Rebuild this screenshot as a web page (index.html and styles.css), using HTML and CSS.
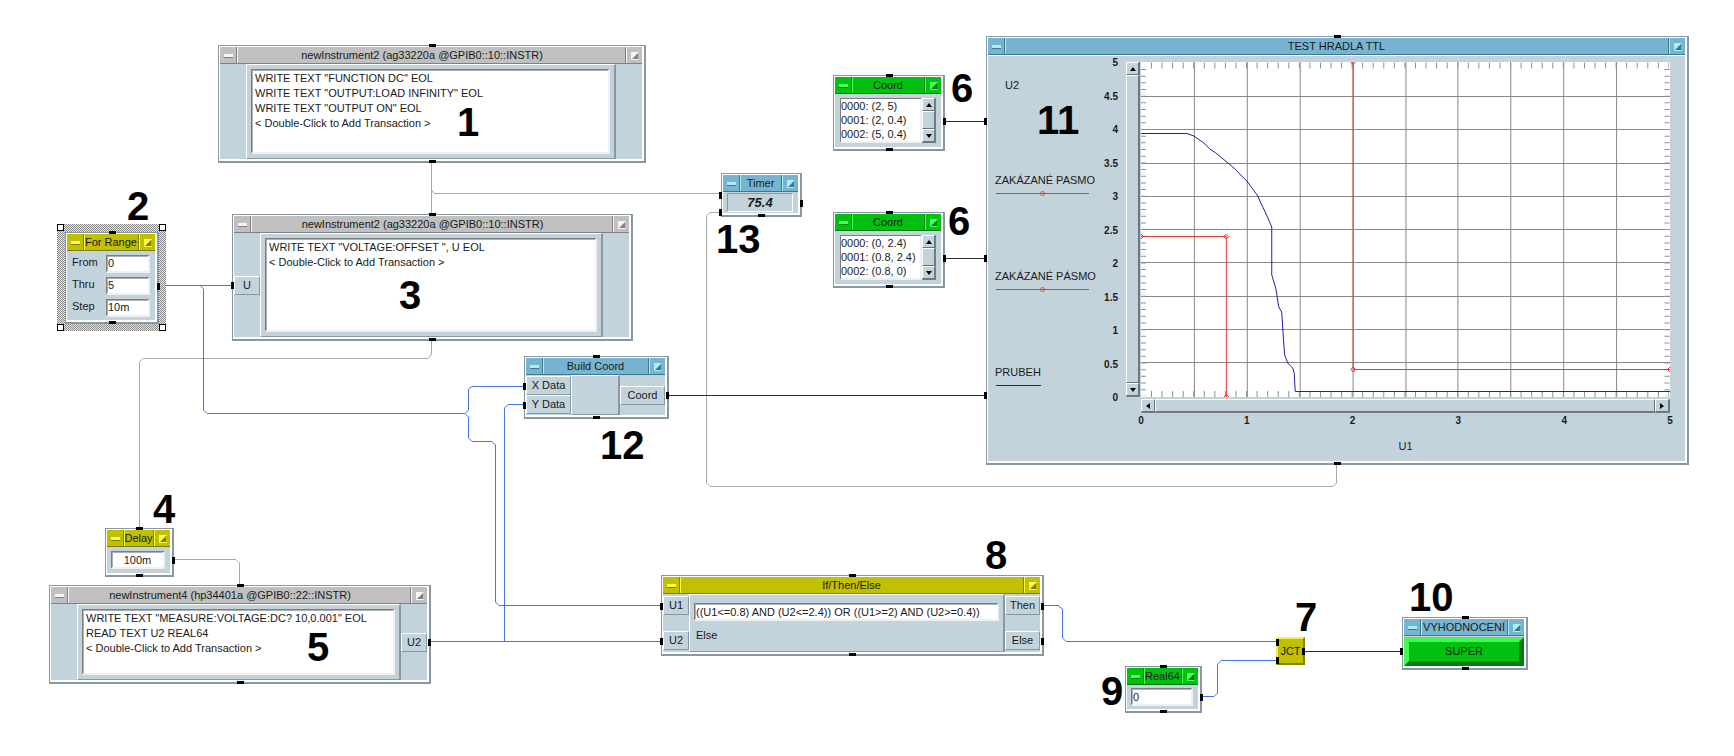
FILE: index.html
```html
<!DOCTYPE html>
<html lang="cs">
<head>
<meta charset="utf-8">
<title>Test hradla TTL</title>
<link rel="stylesheet" href="styles.css">
</head>
<body>
<main class="canvas">
  <svg class="wires" aria-hidden="true">
    <g class="seq">
      <path d="M431.500 163V214M431.500 190L434 193.500H721"/>
      <path d="M431.500 340V354L428 358.500H143L139.500 362V528"/>
      <path d="M174 559.500H236L239.500 563V586"/>
      <path d="M1336.500 464V483L1333 486.500H710L706.500 483V216L710 212.500H721"/>
    </g>
    <g class="data">
      <path d="M158 285.500H232M200 285.500L203.500 289V410L207 413.500H465L468.500 410V389L472 386.500H524"/>
      <path d="M465 413.500L468.500 417V438L472 441.500H492L495.500 445V602L499 605.500H661"/>
      <path d="M431 641.500H661M504.500 641V408L508 404.500H524"/>
      <path d="M1043 605.500H1058L1062.500 609V638L1066 641.500H1276"/>
      <path d="M1201 696.500H1214L1217.500 693V664L1221 660.500H1276"/>
    </g>
    <g class="solid">
      <path d="M945 121.500H986M945 258.500H986M669 395.500H986M1305 651.500H1401"/>
    </g>
  </svg>

  <section class="node gray n-output">
    <header class="bar"><button class="menu" aria-label="Menu"></button><h2>newInstrument2 (ag33220a @GPIB0::10::INSTR)</h2><button class="min" aria-label="Minimize"></button></header>
    <div class="body split">
      <div class="side"></div>
      <div class="panel"><ul class="box">
        <li>WRITE TEXT "FUNCTION DC" EOL</li>
        <li>WRITE TEXT "OUTPUT:LOAD INFINITY" EOL</li>
        <li>WRITE TEXT "OUTPUT ON" EOL</li>
        <li>&lt; Double-Click to Add Transaction &gt;</li>
      </ul></div>
      <div class="side"></div>
    </div>
    <i class="port top"></i><i class="port bottom"></i>
  </section>

  <div class="selection">
    <i class="grip"></i><i class="grip"></i><i class="grip"></i><i class="grip"></i>
  </div>
  <section class="node yellow n-range">
    <header class="bar"><button class="menu" aria-label="Menu"></button><h2>For Range</h2><button class="min" aria-label="Minimize"></button></header>
    <div class="body form">
      <label for="from">From</label><input id="from" class="box" value="0">
      <label for="thru">Thru</label><input id="thru" class="box" value="5">
      <label for="step">Step</label><input id="step" class="box" value="10m">
      <i class="port right"></i>
    </div>
    <i class="port top"></i><i class="port bottom"></i>
  </section>

  <section class="node gray n-offset">
    <header class="bar"><button class="menu" aria-label="Menu"></button><h2>newInstrument2 (ag33220a @GPIB0::10::INSTR)</h2><button class="min" aria-label="Minimize"></button></header>
    <div class="body split">
      <div class="side"><span class="tab">U<i class="port left"></i></span></div>
      <div class="panel"><ul class="box">
        <li>WRITE TEXT "VOLTAGE:OFFSET ", U EOL</li>
        <li>&lt; Double-Click to Add Transaction &gt;</li>
      </ul></div>
      <div class="side"></div>
    </div>
    <i class="port top"></i><i class="port bottom"></i>
  </section>

  <section class="node yellow n-delay">
    <header class="bar"><button class="menu" aria-label="Menu"></button><h2>Delay</h2><button class="min" aria-label="Minimize"></button></header>
    <div class="body single"><input class="box centered" aria-label="Delay" value="100m"><i class="port right"></i></div>
    <i class="port top"></i><i class="port bottom"></i>
  </section>

  <section class="node gray n-measure">
    <header class="bar"><button class="menu" aria-label="Menu"></button><h2>newInstrument4 (hp34401a @GPIB0::22::INSTR)</h2><button class="min" aria-label="Minimize"></button></header>
    <div class="body split">
      <div class="side"></div>
      <div class="panel"><ul class="box">
        <li>WRITE TEXT "MEASURE:VOLTAGE:DC? 10,0.001" EOL</li>
        <li>READ TEXT U2 REAL64</li>
        <li>&lt; Double-Click to Add Transaction &gt;</li>
      </ul></div>
      <div class="side"><span class="tab">U2<i class="port right"></i></span></div>
    </div>
    <i class="port top"></i><i class="port bottom"></i>
  </section>

  <section class="node blue n-build">
    <header class="bar"><button class="menu" aria-label="Menu"></button><h2>Build Coord</h2><button class="min" aria-label="Minimize"></button></header>
    <div class="body split">
      <div class="side wide"><span class="tab">X Data<i class="port left"></i></span><span class="tab">Y Data<i class="port left"></i></span></div>
      <div class="panel"></div>
      <div class="side wide"><span class="tab">Coord<i class="port right"></i></span></div>
    </div>
    <i class="port top"></i><i class="port bottom"></i>
  </section>

  <section class="node yellow n-if">
    <header class="bar"><button class="menu" aria-label="Menu"></button><h2>If/Then/Else</h2><button class="min" aria-label="Minimize"></button></header>
    <div class="body split">
      <div class="side apart"><span class="tab">U1<i class="port left"></i></span><span class="tab">U2<i class="port left"></i></span></div>
      <div class="panel cond"><input class="box" aria-label="Condition" value="((U1&lt;=0.8) AND (U2&lt;=2.4)) OR ((U1&gt;=2) AND (U2&gt;=0.4))"><p>Else</p></div>
      <div class="side apart out"><span class="tab">Then<i class="port right"></i></span><span class="tab">Else<i class="port right"></i></span></div>
    </div>
    <i class="port top"></i><i class="port bottom"></i>
  </section>

  <section class="node blue n-timer">
    <header class="bar"><button class="menu" aria-label="Menu"></button><h2>Timer</h2><button class="min" aria-label="Minimize"></button></header>
    <div class="body single"><output>75.4</output><i class="port left first"></i><i class="port left last"></i><i class="port right"></i></div>
    <i class="port bottom"></i>
  </section>

  <section class="node green n-coord-a">
    <header class="bar"><button class="menu" aria-label="Menu"></button><h2>Coord</h2><button class="min" aria-label="Minimize"></button></header>
    <div class="body list">
      <ul class="box"><li>0000: (2, 5)</li><li>0001: (2, 0.4)</li><li>0002: (5, 0.4)</li></ul>
      <div class="scroll"><button aria-label="Up"><i class="arrow up"></i></button><span class="thumb"></span><button aria-label="Down"><i class="arrow down"></i></button></div>
      <i class="port right"></i>
    </div>
    <i class="port top"></i><i class="port bottom"></i>
  </section>

  <section class="node green n-coord-b">
    <header class="bar"><button class="menu" aria-label="Menu"></button><h2>Coord</h2><button class="min" aria-label="Minimize"></button></header>
    <div class="body list">
      <ul class="box"><li>0000: (0, 2.4)</li><li>0001: (0.8, 2.4)</li><li>0002: (0.8, 0)</li></ul>
      <div class="scroll"><button aria-label="Up"><i class="arrow up"></i></button><span class="thumb"></span><button aria-label="Down"><i class="arrow down"></i></button></div>
      <i class="port right"></i>
    </div>
    <i class="port top"></i><i class="port bottom"></i>
  </section>

  <section class="node blue n-chart">
    <header class="bar"><button class="menu" aria-label="Menu"></button><h2>TEST HRADLA TTL</h2><button class="min" aria-label="Minimize"></button></header>
    <div class="body graph">
      <div class="legend">
        <p class="axis-name">U2</p>
        <div class="trace"><span>ZAKÁZANÉ PASMO</span><svg viewBox="0 0 93 7"><path class="red" d="M0 3.500H93M46.500 1L49 3.500L46.500 6L44 3.500Z"/></svg></div>
        <div class="trace"><span>ZAKÁZANÉ PÁSMO</span><svg viewBox="0 0 93 7"><path class="red" d="M0 3.500H93M46.500 1L49 3.500L46.500 6L44 3.500Z"/></svg></div>
        <div class="trace"><span>PRUBEH</span><svg viewBox="0 0 93 7"><path class="navy" d="M0 3.500H45"/></svg></div>
      </div>
      <div class="y-labels"><span>5</span><span>4.5</span><span>4</span><span>3.5</span><span>3</span><span>2.5</span><span>2</span><span>1.5</span><span>1</span><span>0.5</span><span>0</span></div>
      <div class="scroll tall"><button aria-label="Up"><i class="arrow up"></i></button><span class="thumb"></span><button aria-label="Down"><i class="arrow down"></i></button></div>
      <svg class="plot" viewBox="0 0 530 335" preserveAspectRatio="none">
        <path class="grid" d="M53.500 0V335M106.500 0V335M159.500 0V335M212.500 0V335M265.500 0V335M317.500 0V335M370.500 0V335M423.500 0V335M476.500 0V335M0 34.500H530M0 67.500H530M0 101.500H530M0 134.500H530M0 167.500H530M0 200.500H530M0 234.500H530M0 267.500H530M0 300.500H530"/>
        <path class="ticks-x" d="M10 3.500H529M10 332H529"/>
        <path class="ticks-y" d="M2.500 7V334M527 7V334"/>
        <path class="navy" d="M0 71.500H46L53 74L63 81L69 87L75 91L92 105L106 119L112 127L117 134L120 141L124 149L128 158L131 165V213L135 226L138 245L141 250L143 281L144 293L147 301L152 306L153.500 311L154.500 329.500H530"/>
        <path class="red" d="M0 174.500H85.500V335M212.500 0V307.500H530"/>
        <path class="red" d="M85.500 172L88 174.500L85.500 177L83 174.500ZM0 172L2.500 174.500L0 177M83 335L85.500 332.500L88 335M212.500 305L215 307.500L212.500 310L210 307.500ZM210 0L212.500 2.500L215 0M530 305L527.500 307.500L530 310"/>
      </svg>
      <div class="scroll flat"><button aria-label="Left"><i class="arrow prev"></i></button><span class="thumb"></span><button aria-label="Right"><i class="arrow next"></i></button></div>
      <div class="x-labels"><span>0</span><span>1</span><span>2</span><span>3</span><span>4</span><span>5</span></div>
      <p class="x-name">U1</p>
      <i class="port left first"></i><i class="port left"></i><i class="port left last"></i>
    </div>
    <i class="port top"></i><i class="port bottom"></i>
  </section>

  <div class="jct">JCT<i class="port left first"></i><i class="port left last"></i><i class="port right"></i></div>

  <section class="node green n-real">
    <header class="bar"><button class="menu" aria-label="Menu"></button><h2>Real64</h2><button class="min" aria-label="Minimize"></button></header>
    <div class="body single"><input class="box" aria-label="Real64" value="0"><i class="port right"></i></div>
    <i class="port top"></i><i class="port bottom"></i>
  </section>

  <section class="node blue n-result">
    <header class="bar"><button class="menu" aria-label="Menu"></button><h2>VYHODNOCENÍ</h2><button class="min" aria-label="Minimize"></button></header>
    <div class="body"><button class="verdict">SUPER</button><i class="port left"></i></div>
    <i class="port top"></i><i class="port bottom"></i>
  </section>

  <b class="mark m1">1</b><b class="mark m2">2</b><b class="mark m3">3</b><b class="mark m4">4</b><b class="mark m5">5</b>
  <b class="mark m6a">6</b><b class="mark m6b">6</b><b class="mark m7">7</b><b class="mark m8">8</b><b class="mark m9">9</b>
  <b class="mark m10">10</b><b class="mark m11">11</b><b class="mark m12">12</b><b class="mark m13">13</b>
</main>
</body>
</html>
```
FILE: styles.css
```css
* { box-sizing: border-box; }

body {
  margin: 0;
  background: #fff;
  color: #1a1a1a;
  font: 11px/15px "Liberation Sans", Arial, sans-serif;
}

h2, p, ul { margin: 0; padding: 0; font: inherit; }
ul { list-style: none; }
input, button { font: inherit; color: inherit; border-radius: 0; margin: 0; padding: 0; }

.canvas { position: relative; min-height: 100vh; }

.wires { position: absolute; inset: 0; width: 100%; height: 100%; fill: none; }
.seq { stroke: #a8a8a8; }
.data { stroke: #4474e4; }
.solid { stroke: #2c2c2c; }

/* Node frame */
.node {
  position: absolute;
  display: flex;
  flex-direction: column;
  background: #fff;
  border: 1px solid #8798a2;
  border-right-width: 2px;
  border-bottom-width: 2px;
  padding: 1px 2px 2px 1px;
}
.gray { --c: #c0c0c0; --hi: #f4f4f4; --lo: #808080; }
.blue { --c: #78b4d0; --hi: #a4f0f4; --lo: #3c7890; }
.yellow { --c: #c0c000; --hi: #f8f850; --lo: #808000; }
.green { --c: #00c010; --hi: #50f860; --lo: #008010; }

.bar {
  display: flex;
  height: 17px;
  flex: none;
  background: var(--c);
  border-bottom: 1px solid var(--lo);
}
.bar h2 { flex: 1; min-width: 0; text-align: center; line-height: 16px; white-space: nowrap; }
.gray .bar h2 { padding-right: 18px; }
.bar button {
  position: relative;
  width: 17px;
  flex: none;
  background: var(--c);
  border: 0 solid var(--lo);
}
.bar .menu { border-right: 1px solid var(--lo); box-shadow: 1px 0 var(--hi); }
.bar .min { border-left: 1px solid var(--lo); box-shadow: inset 1px 0 var(--hi); }
.menu::before {
  content: "";
  position: absolute;
  left: 4px;
  top: 7px;
  width: 9px;
  height: 3px;
  background: var(--hi);
  border-bottom: 1px solid var(--lo);
}
.min::before {
  content: "";
  position: absolute;
  left: 5px;
  top: 5px;
  width: 6px;
  height: 6px;
  background: linear-gradient(135deg, var(--hi) 45%, var(--lo) 55%);
  border: 1px solid var(--hi);
  border-right-color: var(--c);
}

.body { position: relative; flex: 1; min-height: 0; background: #c3d3dc; }
.split { display: flex; }
.side { width: 26px; flex: none; display: flex; flex-direction: column; justify-content: center; }
.side.wide { width: 45px; }
.side.apart { justify-content: space-between; padding: 2px 0; }
.side.out { width: 35px; }
.tab {
  position: relative;
  height: 19px;
  line-height: 17px;
  text-align: center;
  border: 1px solid #fff;
  border-right-color: #8798a2;
  border-bottom-color: #8798a2;
}
.panel {
  flex: 1;
  min-width: 0;
  display: flex;
  padding: 4px;
  border: 1px solid #fff;
  border-right: 2px solid #8798a2;
  border-bottom-color: #8798a2;
}
.box {
  flex: 1;
  min-width: 0;
  width: 100%;
  background: #fff;
  border: 1px solid #7c7c7c;
  border-right: 2px solid #f0f0f0;
  border-bottom: 2px solid #f0f0f0;
  outline: 0;
}
.panel ul.box { padding: 1px 3px; box-shadow: inset 1px 1px #b0b0b0; }
input.box { height: 18px; padding: 0 1px; box-shadow: inset 1px 1px #b0b0b0; }
.centered { text-align: center; }
.cond { flex-direction: column; padding: 8px 4px; gap: 7px; }
.cond .box { flex: none; }
.cond p { padding-left: 2px; }

.form { display: grid; grid-template-columns: 34px 1fr; align-content: center; gap: 4px 0; padding: 0 5px; }
.single { display: flex; align-items: center; padding: 0 5px 0 4px; }
.single output {
  flex: 1;
  height: 19px;
  text-align: center;
  font: italic bold 13px/17px "Liberation Sans", Arial, sans-serif;
  border: 1px solid #8798a2;
  border-right-color: #fff;
  border-bottom-color: #fff;
}
.list { display: flex; padding: 4px 5px; }
.list ul { line-height: 14px; padding: 0; white-space: nowrap; }

/* Scroll bars */
.scroll { width: 14px; flex: none; display: flex; flex-direction: column; border-right: 1px solid #7c7c7c; border-bottom: 1px solid #7c7c7c; }
.scroll button, .thumb {
  display: flex;
  align-items: center;
  justify-content: center;
  background: #c3d3dc;
  border: 1px solid #fff;
  border-right-color: #66757d;
  border-bottom-color: #66757d;
}
.scroll button { height: 13px; flex: none; }
.thumb { flex: 1; }
.arrow { border: 3px solid transparent; }
.up { border-top: 0; border-bottom: 4px solid #000; }
.down { border-bottom: 0; border-top: 4px solid #000; }
.prev { border-left: 0; border-right: 4px solid #000; }
.next { border-right: 0; border-left: 4px solid #000; }
.scroll.flat { width: auto; height: 14px; flex-direction: row; }
.scroll.flat button { width: 14px; height: auto; }

/* Terminals */
.port { position: absolute; background: #000; width: 3px; height: 7px; top: calc(50% - 3px); }
.port.top, .port.bottom { width: 7px; height: 3px; left: calc(50% - 3px); }
.port.top { top: -2px; }
.port.bottom { top: auto; bottom: -2px; }
.port.left { left: -4px; }
.port.right { right: -5px; }

/* Graph */
.graph {
  display: grid;
  grid-template-columns: 110px 26px 14px 1fr;
  grid-template-rows: 335px 14px 11px 1fr;
  column-gap: 1px;
  row-gap: 2px;
  padding: 7px 15px 0 0;
  box-shadow: inset 0 1px #fff;
}
.legend { padding-left: 7px; white-space: nowrap; display: grid; grid-template-rows: 111px 96px 96px 1fr; }
.axis-name { padding: 16px 0 0 10px; }
.trace { display: flex; flex-direction: column; align-items: flex-start; gap: 2px; }
.trace svg { width: 93px; height: 7px; margin-left: 1px; fill: none; }
.y-labels {
  display: flex;
  flex-direction: column;
  justify-content: space-between;
  text-align: right;
  margin: -5px 7px -6px 0;
  font-weight: bold;
  font-size: 10px;
  line-height: 11px;
}
.plot { width: 100%; height: 100%; background: #fff; fill: none; }
.flat { grid-column: 4; }
.x-labels {
  grid-column: 4;
  display: flex;
  justify-content: space-between;
  margin: 0 -5px;
  font-weight: bold;
  font-size: 10px;
  line-height: 11px;
}
.x-labels span { width: 10px; text-align: center; }
.x-name { grid-column: 4; text-align: center; padding-top: 11px; }
.grid { stroke: #888; }
.ticks-x { stroke: #909090; stroke-width: 6; stroke-dasharray: 1 9.58; }
.ticks-y { stroke: #909090; stroke-width: 5; stroke-dasharray: 1 5.67; }
.navy { stroke: #20209c; }
.red { stroke: #e43838; }
.graph .first { top: 63px; }
.graph .last { top: 337px; }

.jct {
  position: absolute;
  left: 1276px;
  top: 637px;
  width: 29px;
  height: 28px;
  line-height: 24px;
  text-align: center;
  background: #c0c000;
  border: 2px solid #f0f040;
  border-right-color: #808000;
  border-bottom-color: #808000;
}
.jct .left { left: -2px; }
.jct .right { right: -2px; }
.jct .first { top: 0; }
.jct .last { top: 18px; }
.n-timer .first { top: 0; }
.n-timer .last { top: 17px; }

.verdict {
  width: 100%;
  height: 100%;
  background: #00c010;
  border: 5px solid;
  border-color: #40f850 #008010 #008010 #40f850;
}
.n-result .body { padding-top: 1px; }

/* Selection outline */
.selection {
  position: absolute;
  left: 57px;
  top: 224px;
  width: 109px;
  height: 107px;
  display: grid;
  grid-template-columns: auto auto;
  align-content: space-between;
  justify-content: space-between;
  background: repeating-conic-gradient(#888 0 25%, #e8e8e8 0 50%) 0 0 / 2px 2px;
}
.grip { width: 7px; height: 7px; background: #fff; border: 1px solid #000; }

/* Node places on the canvas */
.n-output { left: 218px; top: 45px; width: 428px; height: 118px; }
.n-range { left: 65px; top: 232px; width: 94px; height: 92px; }
.n-offset { left: 232px; top: 214px; width: 401px; height: 127px; }
.n-delay { left: 105px; top: 528px; width: 69px; height: 49px; }
.n-measure { left: 49px; top: 585px; width: 382px; height: 99px; }
.n-build { left: 524px; top: 356px; width: 145px; height: 63px; }
.n-if { left: 661px; top: 575px; width: 383px; height: 81px; }
.n-timer { left: 721px; top: 173px; width: 81px; height: 44px; }
.n-coord-a { left: 833px; top: 75px; width: 112px; height: 76px; }
.n-coord-b { left: 833px; top: 212px; width: 112px; height: 76px; }
.n-chart { left: 986px; top: 36px; width: 703px; height: 429px; }
.n-real { left: 1125px; top: 666px; width: 77px; height: 47px; }
.n-result { left: 1402px; top: 617px; width: 126px; height: 53px; }

.mark {
  position: absolute;
  color: #000;
  font-size: 40px;
  line-height: 40px;
}
.m1 { left: 457px; top: 102px; }
.m2 { left: 127px; top: 186px; }
.m3 { left: 399px; top: 275px; }
.m4 { left: 153px; top: 489px; }
.m5 { left: 307px; top: 627px; }
.m6a { left: 951px; top: 68px; }
.m6b { left: 948px; top: 201px; }
.m7 { left: 1295px; top: 597px; }
.m8 { left: 985px; top: 535px; }
.m9 { left: 1101px; top: 671px; }
.m10 { left: 1409px; top: 577px; }
.m11 { left: 1037px; top: 100px; }
.m12 { left: 600px; top: 425px; }
.m13 { left: 716px; top: 219px; }
```
